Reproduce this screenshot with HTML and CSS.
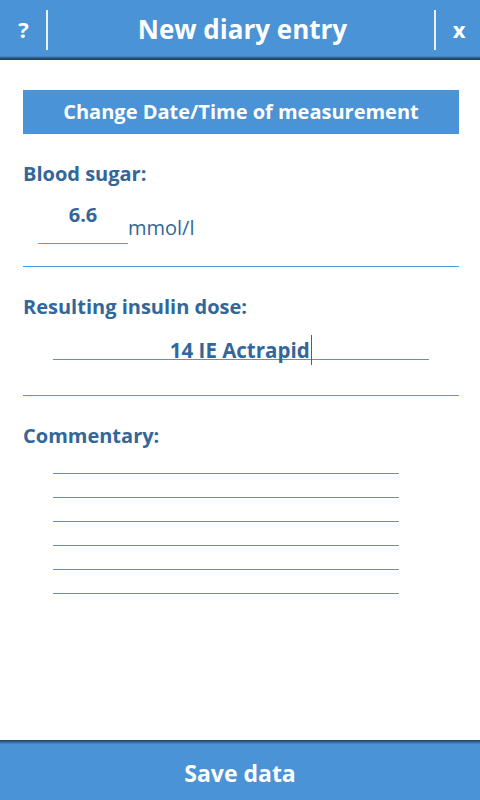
FILE: index.html
```html
<!DOCTYPE html>
<html>
<head>
<meta charset="utf-8">
<link rel="stylesheet" href="styles.css">
</head>
<body>
<div class="app">
  <header class="topbar">
    <div class="tb-btn tb-left">?</div>
    <div class="tb-title">New diary entry</div>
    <div class="tb-btn tb-right">x</div>
  </header>
  <main class="content">
    <div class="datebtn">Change Date/Time of measurement</div>

    <section class="section">
      <div class="label">Blood sugar:</div>
      <div class="sugar-row">
        <div class="sugar-input">6.6</div>
        <div class="unit">mmol/l</div>
      </div>
    </section>

    <section class="section">
      <div class="label">Resulting insulin dose:</div>
      <div class="dose-input"><span class="dose-text">14 IE Actrapid</span><span class="caret"></span></div>
    </section>

    <section class="section last">
      <div class="label">Commentary:</div>
      <div class="lines">
        <div class="line"></div>
        <div class="line"></div>
        <div class="line"></div>
        <div class="line"></div>
        <div class="line"></div>
        <div class="line"></div>
      </div>
    </section>
  </main>
  <footer class="bottombar">Save data</footer>
</div>
</body>
</html>
```

FILE: styles.css
```css
* { box-sizing: border-box; }
html, body {
  margin: 0;
  padding: 0;
  background: #ffffff;
  font-family: "Open Sans", "Noto Sans", "DejaVu Sans", sans-serif;
}
.app {
  width: 480px;
  height: 800px;
  display: flex;
  flex-direction: column;
}
.topbar {
  height: 60px;
  flex: none;
  display: flex;
  align-items: stretch;
  color: #ffffff;
  font-weight: 700;
  background-image: linear-gradient(to bottom, #4a93d6 0, #4a93d6 56px, #3c78ae 57px, #28537a 58px, #1e3f5e 60px);
}
.tb-btn {
  width: 46px;
  display: flex;
  align-items: center;
  justify-content: center;
  font-size: 22px;
  padding-bottom: 2px;
  position: relative;
}
.tb-left { width: 47px; }
.tb-left::after, .tb-right::before {
  content: "";
  position: absolute;
  top: 10px;
  width: 1.5px;
  height: 40px;
  background: #eaf2fa;
}
.tb-left::after { left: 46px; }
.tb-right { padding-left: 4px; }
.tb-right::before { left: 0; }
.tb-title {
  flex: 1;
  display: flex;
  align-items: center;
  justify-content: center;
  font-size: 26px;
  padding-bottom: 2px;
  padding-left: 4px;
}
.content {
  flex: 1;
  padding: 30px 21px 0 23px;
  display: flex;
  flex-direction: column;
}
.datebtn {
  height: 44px;
  background: #4a93d6;
  color: #ffffff;
  font-weight: 700;
  font-size: 20px;
  display: flex;
  align-items: center;
  justify-content: center;
  padding-bottom: 2px;
}
.section {
  border-bottom: 1px solid #4a9be6;
}
.section.last { border-bottom: none; }
.label {
  color: #336699;
  font-weight: 700;
  font-size: 20px;
  line-height: 26px;
  margin-top: 27px;
}
.sugar-row {
  display: flex;
  align-items: flex-end;
  margin-top: 9px;
  padding-left: 15px;
  height: 48px;
  margin-bottom: 22px;
}
.sugar-input {
  width: 90px;
  height: 48px;
  border-bottom: 1px solid #4a9be6;
  color: #336699;
  font-weight: 700;
  font-size: 20px;
  text-align: center;
  line-height: 26px;
  padding-top: 6px;
}
.unit {
  color: #336699;
  font-size: 20px;
  line-height: 26px;
  margin-bottom: 3px;
}
.dose-input {
  margin: 6px 30px 35px 30px;
  height: 34px;
  border-bottom: 1px solid #6690bb;
  display: flex;
  justify-content: center;
  align-items: flex-end;
  color: #336699;
  font-weight: 700;
  font-size: 20.5px;
  line-height: 26px;
}
.dose-text { margin-bottom: -4px; }
.caret {
  width: 1.5px;
  height: 30px;
  background: #336699;
  margin-bottom: -6px;
  margin-left: 1px;
}
.lines {
  margin: 11px 0 0 30px;
  width: 346px;
}
.line {
  height: 24px;
  border-bottom: 1px solid #6690bb;
}
.line:first-child { height: 14px; }
.bottombar {
  height: 60px;
  flex: none;
  color: #ffffff;
  font-weight: 700;
  font-size: 23px;
  display: flex;
  align-items: center;
  justify-content: center;
  padding-top: 6px;
  background-image: linear-gradient(to bottom, #1e3f5e 0, #28537a 1px, #3c78ae 3px, #4a93d6 4px, #4a93d6 100%);
}
```
